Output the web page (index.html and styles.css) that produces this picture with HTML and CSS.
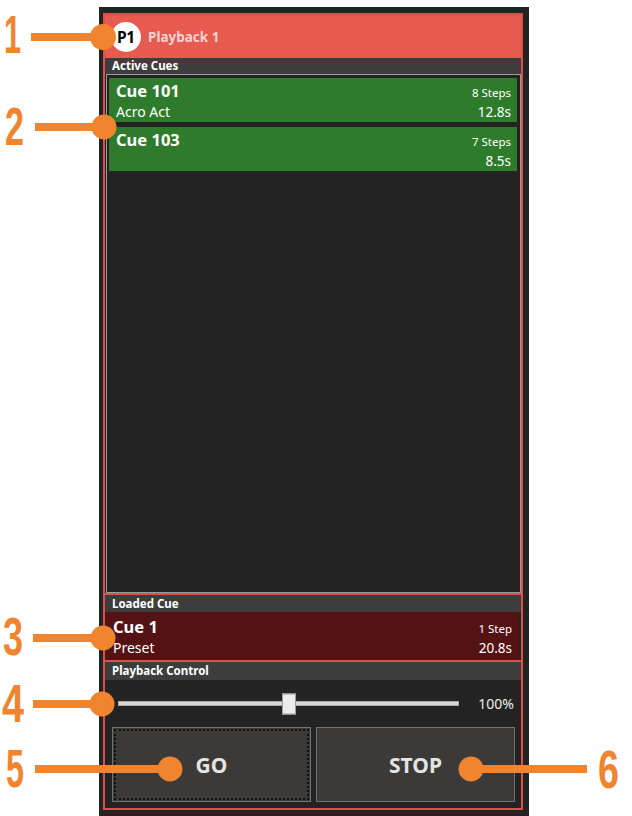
FILE: index.html
```html
<!DOCTYPE html>
<html>
<head>
<meta charset="utf-8">
<link rel="stylesheet" href="styles.css">
</head>
<body>
<div class="stage">
  <div class="panel">
    <div class="frame">
      <div class="pb-header">
        <span class="badge">P1</span>
        <span class="pb-title">Playback 1</span>
      </div>
      <div class="bar bar-active">Active Cues</div>
      <div class="cue-list">
        <div class="cue cue-active">
          <div class="cue-line1"><span class="cue-name">Cue 101</span><span class="cue-steps">8 Steps</span></div>
          <div class="cue-line2"><span class="cue-label">Acro Act</span><span class="cue-time">12.8s</span></div>
        </div>
        <div class="cue cue-active">
          <div class="cue-line1"><span class="cue-name">Cue 103</span><span class="cue-steps">7 Steps</span></div>
          <div class="cue-line2"><span class="cue-label"></span><span class="cue-time">8.5s</span></div>
        </div>
      </div>
      <div class="section">
        <div class="bar bar-loaded">Loaded Cue</div>
        <div class="cue cue-loaded">
          <div class="cue-line1"><span class="cue-name">Cue 1</span><span class="cue-steps">1 Step</span></div>
          <div class="cue-line2"><span class="cue-label">Preset</span><span class="cue-time">20.8s</span></div>
        </div>
      </div>
      <div class="section section-control">
        <div class="bar bar-control">Playback Control</div>
        <div class="slider-row">
          <div class="track"><div class="thumb"></div></div>
          <span class="value">100%</span>
        </div>
        <div class="buttons">
          <button class="btn btn-go">GO</button>
          <button class="btn">STOP</button>
        </div>
      </div>
    </div>
  </div>

  <svg class="callouts" width="632" height="816" viewBox="0 0 632 816">
    <g class="co">
      <rect x="31" y="33" width="72" height="8"/>
      <circle cx="103" cy="37" r="13"/>
      <rect x="35" y="123" width="69" height="8"/>
      <circle cx="104" cy="127" r="12.5"/>
      <rect x="33" y="634" width="70" height="8"/>
      <circle cx="103" cy="638" r="12.5"/>
      <rect x="33" y="700" width="69" height="8"/>
      <circle cx="102" cy="704" r="12.5"/>
      <rect x="35" y="765" width="135" height="8"/>
      <circle cx="170" cy="769" r="12.5"/>
      <rect x="471" y="765" width="116" height="8"/>
      <circle cx="471" cy="769" r="12.5"/>
    </g>
    <g class="co-num">
      <text x="4" y="53" textLength="17" lengthAdjust="spacingAndGlyphs">1</text>
      <text x="5" y="145" textLength="19" lengthAdjust="spacingAndGlyphs">2</text>
      <text x="3" y="655" textLength="20" lengthAdjust="spacingAndGlyphs">3</text>
      <text x="2" y="722" textLength="22" lengthAdjust="spacingAndGlyphs">4</text>
      <text x="6" y="787" textLength="18" lengthAdjust="spacingAndGlyphs">5</text>
      <text x="598" y="788" textLength="21" lengthAdjust="spacingAndGlyphs">6</text>
    </g>
  </svg>
</div>
</body>
</html>
```
FILE: styles.css
```css
html, body {
  margin: 0;
  padding: 0;
  background: #ffffff;
}

body {
  font-family: "Noto Sans", "Open Sans", sans-serif;
}

.stage {
  position: relative;
  width: 632px;
  height: 816px;
  padding: 7px 0 0 99px;
  box-sizing: border-box;
  overflow: hidden;
}

.panel {
  width: 430px;
  height: 809px;
  background: #232323;
  padding: 6px 6px 6px 4px;
  box-sizing: border-box;
}

.frame {
  height: 100%;
  border: 2px solid #d9514a;
  box-sizing: border-box;
  display: flex;
  flex-direction: column;
}

.pb-header {
  flex: none;
  height: 43px;
  background: #e65a50;
  display: flex;
  align-items: center;
  gap: 7px;
  padding-left: 6px;
}

.badge {
  width: 30px;
  height: 30px;
  border-radius: 50%;
  background: #ffffff;
  color: #000000;
  font-weight: 700;
  font-size: 15.5px;
  display: flex;
  align-items: center;
  justify-content: center;
  letter-spacing: -0.3px;
}

.pb-title {
  color: #f7d4cf;
  font-weight: 700;
  font-size: 13.5px;
}

.bar {
  flex: none;
  background: #3d3d3d;
  color: #ffffff;
  font-weight: 700;
  font-size: 11.5px;
  padding-left: 7px;
}

.bar-active {
  height: 16px;
  line-height: 16px;
}

.bar-loaded {
  height: 17px;
  line-height: 17px;
}

.bar-control {
  height: 18px;
  line-height: 18px;
}

.cue-list {
  flex: 1;
  min-height: 0;
  margin-left: 1px;
  border: 1px solid #9b9b9b;
  padding: 3px 3px 3px 2px;
  display: flex;
  flex-direction: column;
  gap: 5px;
}

.cue {
  flex: none;
  color: #ffffff;
  box-sizing: border-box;
}

.cue-active {
  background: #2e7b2c;
  height: 44px;
  padding: 2px 6px 0 7px;
}

.cue-loaded {
  background: #541214;
  height: 48px;
  margin-right: 3px;
  padding: 4px 6px 0 8px;
}

.cue-line1 {
  display: flex;
  justify-content: space-between;
  align-items: baseline;
  height: 21px;
  line-height: 21px;
}

.cue-line2 {
  display: flex;
  justify-content: space-between;
  align-items: baseline;
  height: 22px;
  line-height: 22px;
}

.cue-name {
  font-weight: 700;
  font-size: 16.5px;
}

.cue-steps {
  font-size: 11.5px;
  line-height: 16px;
}

.cue-label {
  font-size: 14px;
}

.cue-time {
  font-size: 13.5px;
}

.section {
  flex: none;
  border-top: 2px solid #d9514a;
  display: flex;
  flex-direction: column;
}

.slider-row {
  height: 47px;
  display: flex;
  align-items: center;
  padding: 0 7px 0 13px;
}

.track {
  flex: 1;
  position: relative;
  height: 5px;
  margin-right: 19px;
  background: #d6d6d6;
  border: 1px solid #aaaaaa;
  box-sizing: border-box;
}

.thumb {
  position: absolute;
  left: 50%;
  top: 50%;
  width: 14px;
  height: 21px;
  transform: translate(-50%, -50%);
  background: #ececec;
  border: 1px solid #9a9a9a;
  box-sizing: border-box;
}

.value {
  font-size: 14px;
  color: #eeeeee;
}

.buttons {
  height: 81px;
  display: flex;
  gap: 5px;
  padding: 0 6px 6px 7px;
  box-sizing: border-box;
}

.btn {
  flex: 1;
  height: 75px;
  margin: 0;
  background: #3b3a39;
  border: 1px solid #727272;
  color: #e4e4e4;
  font-family: "Noto Sans", "Open Sans", sans-serif;
  font-weight: 700;
  font-size: 21px;
  display: flex;
  align-items: center;
  justify-content: center;
  padding: 0;
}

.btn-go {
  outline: 2px dotted #101010;
  outline-offset: -4px;
}

.callouts {
  position: absolute;
  left: 0;
  top: 0;
  pointer-events: none;
}

.co {
  fill: #f0842f;
}

.co-num {
  fill: #f0842f;
  font-family: "Liberation Sans", Arial, sans-serif;
  font-weight: 700;
  font-size: 53px;
}
```
